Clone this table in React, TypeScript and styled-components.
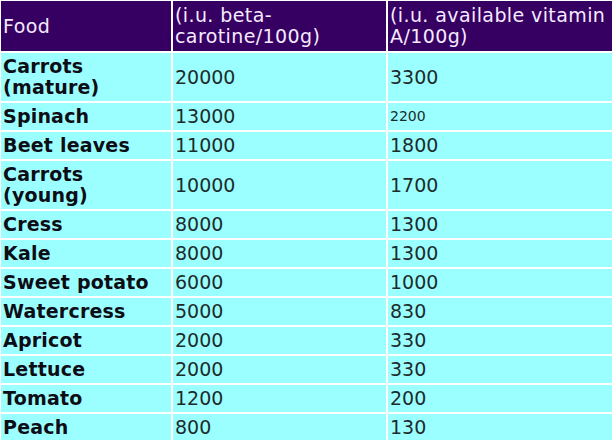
import React from 'react';
import styled, { createGlobalStyle } from 'styled-components';

const GlobalStyle = createGlobalStyle`
  html, body {
    margin: 0;
    padding: 0;
    background: #ffffff;
    overflow: hidden;
  }
`;

const Table = styled.table`
  border-collapse: separate;
  border-spacing: 2px;
  margin: -1px 0 0 -1px;
  table-layout: fixed;
  width: 615px;
  font-family: 'DejaVu Sans', Verdana, sans-serif;
  font-size: 19px;
  line-height: 21px;
  letter-spacing: 0.4px;
`;

const HeadCell = styled.th<{ w: number }>`
  width: ${({ w }) => w}px;
  background: #350062;
  color: #f6eaff;
  font-weight: normal;
  text-align: left;
  vertical-align: middle;
  padding: 4px 2px;
`;

const Cell = styled.td<{ strong?: boolean; small?: boolean }>`
  background: #9cffff;
  color: ${({ strong }) => (strong ? '#0d0d16' : '#1c2b2b')};
  font-weight: ${({ strong }) => (strong ? 700 : 400)};
  font-size: ${({ small }) => (small ? '14px' : '19px')};
  letter-spacing: ${({ strong }) => (strong ? '0.2px' : '0')};
  vertical-align: middle;
  padding: 3px 2px;
`;

type Row = { food: string[]; beta: string; vitA: string; small?: boolean };

const rows: Row[] = [
  { food: ['Carrots', '(mature)'], beta: '20000', vitA: '3300' },
  { food: ['Spinach'], beta: '13000', vitA: '2200', small: true },
  { food: ['Beet leaves'], beta: '11000', vitA: '1800' },
  { food: ['Carrots', '(young)'], beta: '10000', vitA: '1700' },
  { food: ['Cress'], beta: '8000', vitA: '1300' },
  { food: ['Kale'], beta: '8000', vitA: '1300' },
  { food: ['Sweet potato'], beta: '6000', vitA: '1000' },
  { food: ['Watercress'], beta: '5000', vitA: '830' },
  { food: ['Apricot'], beta: '2000', vitA: '330' },
  { food: ['Lettuce'], beta: '2000', vitA: '330' },
  { food: ['Tomato'], beta: '1200', vitA: '200' },
  { food: ['Peach'], beta: '800', vitA: '130' },
];

const App: React.FC = () => {
  return (
    <>
      <GlobalStyle />
      <Table>
        <thead>
          <tr>
            <HeadCell w={166}>Food</HeadCell>
            <HeadCell w={209}>(i.u. beta-<br />carotine/100g)</HeadCell>
            <HeadCell w={220}>(i.u. available vitamin<br />A/100g)</HeadCell>
          </tr>
        </thead>
        <tbody>
          {rows.map((r, i) => (
            <tr key={i}>
              <Cell strong>
                {r.food.map((part, j) => (
                  <React.Fragment key={j}>
                    {j > 0 && <br />}
                    {part}
                  </React.Fragment>
                ))}
              </Cell>
              <Cell>{r.beta}</Cell>
              <Cell small={r.small}>{r.vitA}</Cell>
            </tr>
          ))}
        </tbody>
      </Table>
    </>
  );
};

export default App;
